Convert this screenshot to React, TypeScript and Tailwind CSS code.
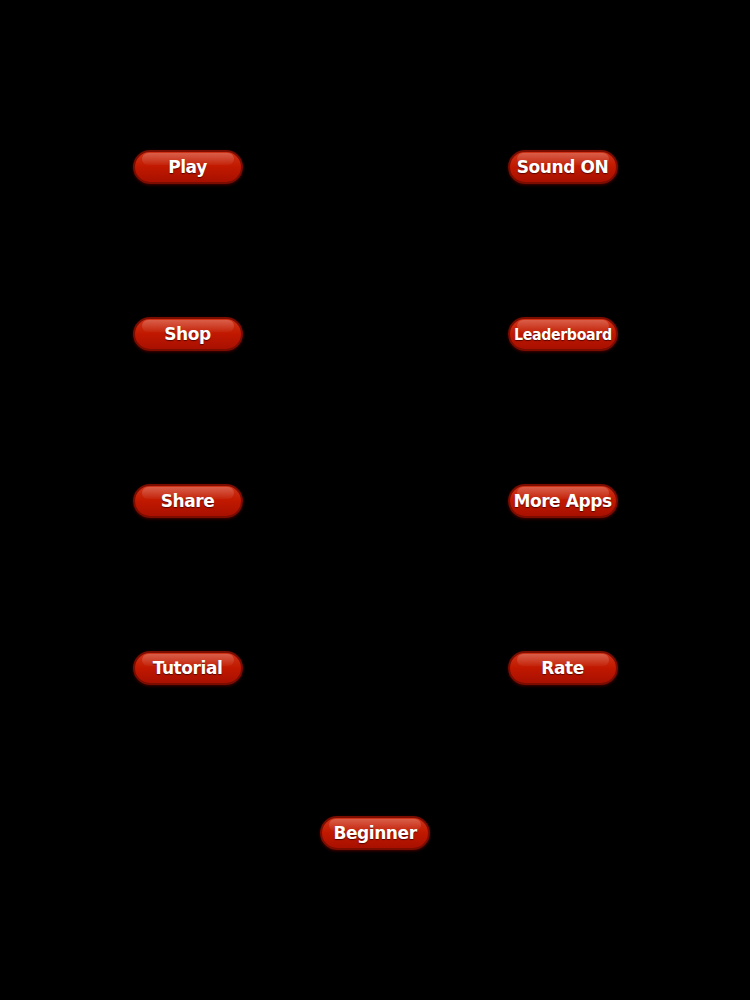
const left = ["Play", "Shop", "Share", "Tutorial"];
const right = ["Sound ON", "Leaderboard", "More Apps", "Rate"];

function GlossButton({ label }: { label: string }) {
  const wide = label.length > 9;
  return (
    <button
      className="relative flex h-[34px] w-[110px] items-center justify-center overflow-hidden rounded-full border-2 border-[#7a0c00] bg-gradient-to-b from-[#cf3216] via-[#c01800] to-[#a81000] pt-[2px] shadow-[0_1px_3px_rgba(120,0,0,0.6)]"
    >
      <span className="pointer-events-none absolute left-[7px] right-[7px] top-[1px] h-[12px] rounded-full bg-gradient-to-b from-[rgba(255,255,255,0.22)] to-[rgba(255,255,255,0.03)]" />
      <span
        className={`relative inline-block whitespace-nowrap font-bold tracking-tight text-white [font-family:'Comic_Sans_MS','DejaVu_Sans',sans-serif] [text-shadow:0_1px_1px_rgba(60,0,0,0.8)] ${
          wide ? "scale-x-[0.86] text-[16.5px]" : "text-[17px]"
        }`}
      >
        {label}
      </span>
    </button>
  );
}

export default function App() {
  return (
    <div className="flex h-[1000px] w-[750px] flex-col items-center bg-black pt-[150px]">
      <div className="grid w-full grid-cols-2 gap-y-[133px]">
        {left.map((l, i) => (
          <div key={l} className="contents">
            <div className="flex justify-center">
              <GlossButton label={l} />
            </div>
            <div className="flex justify-center">
              <GlossButton label={right[i]} />
            </div>
          </div>
        ))}
      </div>
      <div className="mt-[131px]">
        <GlossButton label="Beginner" />
      </div>
    </div>
  );
}
